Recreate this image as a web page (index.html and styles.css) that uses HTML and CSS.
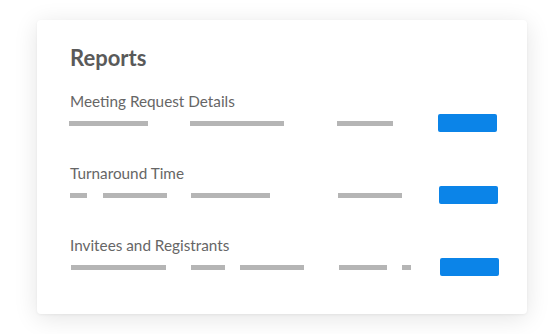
FILE: index.html
```html
<html>
<head>
<meta charset="utf-8">
<title>Reports</title>
<link rel="stylesheet" href="styles.css">
</head>
<body>
<div class="card">
<h2 class="title">Reports</h2>

<div class="report">
<div class="label">Meeting Request Details</div>
<div class="line">
<span class="bar" style="width:79px;margin-left:0"></span>
<span class="bar" style="width:94px;margin-left:42px"></span>
<span class="bar" style="width:56px;margin-left:53px"></span>
<span class="btn" style="margin-left:45px"></span>
</div>
</div>

<div class="report">
<div class="label">Turnaround Time</div>
<div class="line">
<span class="bar" style="width:17px;margin-left:1px"></span>
<span class="bar" style="width:64px;margin-left:16px"></span>
<span class="bar" style="width:79px;margin-left:24px"></span>
<span class="bar" style="width:64px;margin-left:68px"></span>
<span class="btn" style="margin-left:37px"></span>
</div>
</div>

<div class="report">
<div class="label">Invitees and Registrants</div>
<div class="line">
<span class="bar" style="width:95px;margin-left:2px"></span>
<span class="bar" style="width:34px;margin-left:25px"></span>
<span class="bar" style="width:64px;margin-left:15px"></span>
<span class="bar" style="width:48px;margin-left:35px"></span>
<span class="bar" style="width:9px;margin-left:15px"></span>
<span class="btn" style="margin-left:29px"></span>
</div>
</div>
</div>
</body>
</html>
```

FILE: styles.css
```css
body{
margin:0;
background:#fff;
font-family:Lato,"Open Sans",sans-serif;
}
.card{
box-sizing:border-box;
margin:20px 0 0 37px;
width:490px;
height:294px;
padding:25px 30px 0 32px;
background:#fff;
border-radius:4px;
box-shadow:0 4px 24px rgba(0,0,0,0.11),0 1px 3px rgba(0,0,0,0.05);
}
.title{
margin:0 0 0 1px;
font-size:22px;
line-height:25px;
font-weight:700;
color:#5a5a5a;
}
.report{
margin-top:32px;
}
.report:first-of-type{
margin-top:22px;
}
.label{
margin-left:1px;
font-size:15.3px;
line-height:18px;
color:#666;
}
.line{
display:flex;
align-items:center;
height:18px;
margin-top:4px;
}
.bar{
display:block;
height:5px;
background:#b5b5b5;
flex:none;
}
.btn{
display:block;
width:59px;
height:18px;
border-radius:2px;
background:#0b84e8;
flex:none;
}
```
